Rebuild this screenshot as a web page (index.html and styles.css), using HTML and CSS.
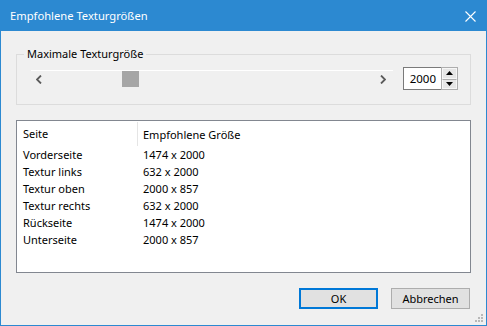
FILE: index.html
```html
<!DOCTYPE html>
<html lang="de">
<head>
  <meta charset="UTF-8" />
  <title>Empfohlene Texturgrößen</title>
  <link rel="stylesheet" href="styles.css">
</head>
<body>
  <div class="window">
    <div class="titlebar">
      <span class="title">Empfohlene Texturgrößen</span>
      <svg class="close" width="11" height="11" viewBox="0 0 11 11">
        <path d="M0.5 0.5 L10.5 10.5 M10.5 0.5 L0.5 10.5" stroke="#fff" stroke-width="1.1" fill="none" />
      </svg>
    </div>

    <div class="content">
      <fieldset class="group">
        <legend>Maximale Texturgröße</legend>
        <div class="slider-row">
          <div class="slider">
            <svg class="arrow" width="6" height="9" viewBox="0 0 6 9">
              <path d="M5 0.5 L1 4.5 L5 8.5" stroke="#5a5a5a" stroke-width="1.8" fill="none" />
            </svg>
            <div class="track">
              <div class="thumb" style="margin-left: 80px;"></div>
            </div>
            <svg class="arrow" width="6" height="9" viewBox="0 0 6 9">
              <path d="M1 0.5 L5 4.5 L1 8.5" stroke="#5a5a5a" stroke-width="1.8" fill="none" />
            </svg>
          </div>
          <div class="spinner">
            <div class="spin-value">2000</div>
            <div class="spin-buttons">
              <div class="spin-btn">
                <svg width="7" height="4" viewBox="0 0 7 4"><path d="M3.5 0 L7 4 L0 4 Z" fill="#000" /></svg>
              </div>
              <div class="spin-btn">
                <svg width="7" height="4" viewBox="0 0 7 4"><path d="M0 0 L7 0 L3.5 4 Z" fill="#000" /></svg>
              </div>
            </div>
          </div>
        </div>
      </fieldset>

      <div class="list">
        <div class="list-head">
          <div class="col1">Seite</div>
          <div class="col2 sep">Empfohlene Größe</div>
        </div>
        <div class="list-row"><div class="col1">Vorderseite</div><div class="col2">1474 x 2000</div></div>
        <div class="list-row"><div class="col1">Textur links</div><div class="col2">632 x 2000</div></div>
        <div class="list-row"><div class="col1">Textur oben</div><div class="col2">2000 x 857</div></div>
        <div class="list-row"><div class="col1">Textur rechts</div><div class="col2">632 x 2000</div></div>
        <div class="list-row"><div class="col1">Rückseite</div><div class="col2">1474 x 2000</div></div>
        <div class="list-row"><div class="col1">Unterseite</div><div class="col2">2000 x 857</div></div>
      </div>

      <div class="buttons">
        <button class="btn default">OK</button>
        <button class="btn">Abbrechen</button>
      </div>
    </div>

    <svg class="grip" width="9" height="9" viewBox="0 0 9 9">
      <rect x="6" y="0" width="2" height="2" fill="#b8b8b8" />
      <rect x="3" y="3" width="2" height="2" fill="#b8b8b8" />
      <rect x="6" y="3" width="2" height="2" fill="#b8b8b8" />
      <rect x="0" y="6" width="2" height="2" fill="#b8b8b8" />
      <rect x="3" y="6" width="2" height="2" fill="#b8b8b8" />
      <rect x="6" y="6" width="2" height="2" fill="#b8b8b8" />
    </svg>
  </div>
</body>
</html>
```

FILE: styles.css
```css
* {
  box-sizing: border-box;
}
body {
  margin: 0;
  font-family: "Noto Sans", "Open Sans", sans-serif;
  font-size: 11px;
  color: #000;
  background: #f0f0f0;
}
.window {
  position: relative;
  width: 487px;
  height: 326px;
  border: 1px solid #2c89d1;
  border-top: none;
  background: #f0f0f0;
  display: flex;
  flex-direction: column;
}
.titlebar {
  height: 31px;
  margin: 0 -1px;
  background: #2c89d1;
  color: #fff;
  display: flex;
  align-items: center;
  justify-content: space-between;
  padding: 0 10px 0 10px;
}
.title {
  font-size: 11.2px;
  margin-top: -1px;
}
.close {
  margin-right: 1px;
  margin-top: 1px;
}
.content {
  flex: 1;
  padding: 15px 15px 0 15px;
  display: flex;
  flex-direction: column;
}

/* group box */
.group {
  margin: 0;
  border: 1px solid #dcdcdc;
  padding: 5px 12px 14px 14px;
  min-width: 0;
}
.group legend {
  padding: 0 3px;
  margin-left: -7px;
  line-height: 16px;
}
.slider-row {
  display: flex;
  align-items: flex-start;
  gap: 10px;
}
.slider {
  flex: 1;
  margin-top: 3px;
  height: 18px;
  border-top: 1px solid #fff;
  display: flex;
  align-items: center;
  padding: 0 7px 0 5px;
}
.track {
  flex: 1;
  height: 17px;
  display: flex;
}
.thumb {
  width: 17px;
  height: 16px;
  background: #a6a6a6;
}
.arrow {
  display: block;
}
.spinner {
  display: flex;
  height: 23px;
}
.spin-value {
  width: 38px;
  border: 1px solid #7a7a7a;
  border-right: none;
  background: #fff;
  text-align: right;
  padding-right: 5px;
  line-height: 21px;
  font-size: 11.5px;
}
.spin-buttons {
  width: 17px;
  display: flex;
  flex-direction: column;
  border: 1px solid #adadad;
  background: #e6e6e6;
}
.spin-btn {
  flex: 1;
  display: flex;
  align-items: center;
  justify-content: center;
  border: 1px solid #f6f6f6;
}
.spin-btn + .spin-btn {
  border-top: 1px solid #adadad;
}
.spin-btn svg {
  display: block;
}

/* list */
.list {
  margin-top: 15px;
  height: 153px;
  border: 1px solid #828790;
  background: #fff;
}
.list-head {
  display: flex;
  height: 25px;
  align-items: stretch;
}
.list-head .col1,
.list-head .col2 {
  display: flex;
  align-items: center;
}
.list-row {
  display: flex;
  height: 17px;
  line-height: 17px;
}
.col1 {
  width: 120px;
  padding-left: 6px;
}
.col2 {
  padding-left: 6px;
}
.col2.sep {
  border-left: 1px solid #e5e5e5;
  padding-left: 5px;
  margin: 1px 0 0 0;
}

/* buttons */
.buttons {
  margin-top: 15px;
  display: flex;
  justify-content: flex-end;
  gap: 13px;
  padding-right: 1px;
}
.btn {
  width: 79px;
  height: 21px;
  font: inherit;
  background: #e1e1e1;
  border: 1px solid #adadad;
  padding: 0;
  color: #000;
}
.btn.default {
  border: 2px solid #0078d7;
}
.grip {
  position: absolute;
  right: 2px;
  bottom: 2px;
}
```
